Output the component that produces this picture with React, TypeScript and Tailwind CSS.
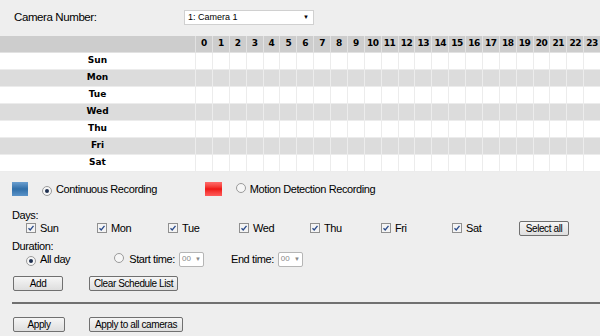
import React from "react";

const days = ["Sun", "Mon", "Tue", "Wed", "Thu", "Fri", "Sat"];
const hours = Array.from({ length: 24 }, (_, i) => i);

function Check() {
  return (
    <span className="inline-flex h-[10px] w-[10px] items-center justify-center border border-[#8f8f8f] bg-[#f4f4f4]">
      <svg width="8" height="8" viewBox="0 0 8 8">
        <path d="M1.5 4.2 L3.2 6 L6.5 1.8" fill="none" stroke="#2a4a8a" strokeWidth="1.3" />
      </svg>
    </span>
  );
}

function Radio({ on }: { on?: boolean }) {
  return (
    <span className="inline-flex h-[10px] w-[10px] items-center justify-center rounded-full border border-[#9a9a9a] bg-[#f6f6f6]">
      {on && <span className="h-[4px] w-[4px] rounded-full bg-[#1f3050]" />}
    </span>
  );
}

function Btn({ children, w }: { children: React.ReactNode; w: string }) {
  return (
    <div
      className={`flex h-[15px] items-center justify-center whitespace-nowrap rounded-[2px] border border-[#707070] bg-gradient-to-b from-[#f6f6f6] to-[#dedede] text-[10px] tracking-[-0.4px] text-black ${w}`}
    >
      {children}
    </div>
  );
}

function MiniSelect() {
  return (
    <div className="flex h-[15px] w-[25px] items-center justify-between rounded-[2px] border border-[#b5b5b5] bg-white px-[2px] text-[8px] tracking-normal text-[#888]">
      <span>00</span>
      <span className="text-[6px]">▼</span>
    </div>
  );
}

export default function App() {
  return (
    <div
      className="h-[336px] w-[600px] overflow-hidden bg-[#eeeeee] text-[11px] tracking-[-0.4px] text-black"
      style={{ fontFamily: "'Liberation Sans', Arial, sans-serif" }}
    >
      {/* Camera number */}
      <div className="flex h-[36px] items-center pb-[1px]">
        <div className="ml-[14px] w-[170px] text-[11.5px]">Camera Number:</div>
        <div className="flex h-[15px] w-[130px] items-center justify-between border border-[#d0d0d0] bg-white pl-[3px] pr-[4px] text-[9px] tracking-normal">
          <span>1: Camera 1</span>
          <span className="text-[6px]">▼</span>
        </div>
      </div>

      {/* Schedule table */}
      <div
        className="grid w-[600px] grid-cols-[195px_repeat(24,1fr)] text-[9px] font-bold tracking-normal"
        style={{ fontFamily: "'DejaVu Sans', Verdana, sans-serif" }}
      >
        <div className="h-[17px] border-b border-[#e2e2e2] bg-[#cdcdcd]" />
        {hours.map((h) => (
          <div
            key={h}
            className="flex h-[17px] items-center justify-center border-b border-l border-[#e2e2e2] bg-[#cdcdcd] tracking-[-0.5px]"
          >
            {h}
          </div>
        ))}
        {days.map((d, i) => {
          const bg = i % 2 === 1 ? "bg-[#dcdcdc]" : "bg-white";
          return (
            <React.Fragment key={d}>
              <div className={`flex h-[17px] items-center justify-center border-b border-[#ececec] ${bg}`}>
                {d}
              </div>
              {hours.map((h) => (
                <div key={h} className={`h-[17px] border-b border-l border-[#ececec] ${bg}`} />
              ))}
            </React.Fragment>
          );
        })}
      </div>

      {/* Legend */}
      <div className="mt-[10px] flex h-[14px] items-center">
        <div className="ml-[12px] h-[14px] w-[16px] bg-gradient-to-b from-[#6a9fd0] via-[#2f6ea8] to-[#5a93c9]" />
        <div className="ml-[14px]">
          <Radio on />
        </div>
        <span className="ml-[4px]">Continuous Recording</span>
        <div className="ml-[48px] h-[14px] w-[17px] bg-gradient-to-b from-[#ff6a6a] via-[#ee1111] to-[#ff5a5a]" />
        <div className="ml-[14px]">
          <Radio />
        </div>
        <span className="ml-[4px]">Motion Detection Recording</span>
      </div>

      {/* Days */}
      <div className="ml-[12px] mt-[13px] leading-[12px]">Days:</div>
      <div className="flex h-[14px] items-center">
        <div className="ml-[26px] flex">
          {days.map((d) => (
            <div key={d} className="flex w-[71px] items-center">
              <Check />
              <span className="ml-[4px]">{d}</span>
            </div>
          ))}
        </div>
        <div className="ml-[-4px]">
          <Btn w="w-[50px]">Select all</Btn>
        </div>
      </div>

      {/* Duration */}
      <div className="ml-[12px] mt-[5px] leading-[12px]">Duration:</div>
      <div className="flex h-[14px] items-center">
        <div className="ml-[26px]">
          <Radio on />
        </div>
        <span className="ml-[4px]">All day</span>
        <div className="ml-[44px]">
          <Radio />
        </div>
        <span className="ml-[5px]">Start time:</span>
        <div className="ml-[4px]">
          <MiniSelect />
        </div>
        <span className="ml-[27px]">End time:</span>
        <div className="ml-[4px]">
          <MiniSelect />
        </div>
      </div>

      {/* Add / Clear */}
      <div className="mt-[10px] flex items-center">
        <div className="ml-[13px]">
          <Btn w="w-[50px]">Add</Btn>
        </div>
        <div className="ml-[26px]">
          <Btn w="w-[89px]">Clear Schedule List</Btn>
        </div>
      </div>

      <div className="ml-[12px] mt-[11px] h-[2px] bg-[#707070]" />

      <div className="mt-[13px] flex items-center">
        <div className="ml-[13px]">
          <Btn w="w-[52px]">Apply</Btn>
        </div>
        <div className="ml-[24px]">
          <Btn w="w-[94px]">Apply to all cameras</Btn>
        </div>
      </div>
    </div>
  );
}
